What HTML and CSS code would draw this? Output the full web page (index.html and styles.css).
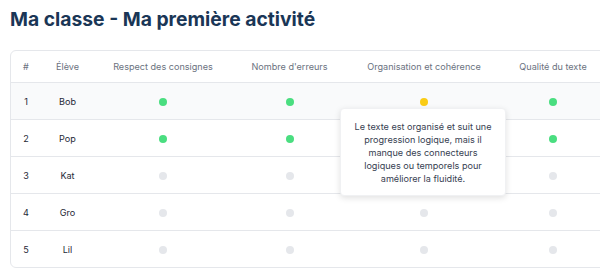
FILE: index.html
```html
<!DOCTYPE html>
<html lang="fr">
<head>
<meta charset="utf-8">
<title>Ma classe</title>
<link rel="stylesheet" href="styles.css">
</head>
<body>
<h1 class="title">Ma classe - Ma première activité</h1>
<div class="card">
  <table class="grid">
    <colgroup>
      <col class="c-num"><col class="c-name"><col class="c-a"><col class="c-b"><col class="c-c"><col class="c-d"><col class="c-e">
    </colgroup>
    <thead>
      <tr>
        <th>#</th><th>Élève</th><th>Respect des consignes</th><th>Nombre d'erreurs</th><th>Organisation et cohérence</th><th>Qualité du texte</th><th></th>
      </tr>
    </thead>
    <tbody>
      <tr class="hover">
        <td>1</td><td>Bob</td><td><span class="dot green"></span></td><td><span class="dot green"></span></td>
        <td class="has-tip"><span class="dot yellow"></span>
          <div class="tip">Le texte est organisé et suit une progression logique, mais il manque des connecteurs logiques ou temporels pour améliorer la fluidité.</div>
        </td>
        <td><span class="dot green"></span></td><td></td>
      </tr>
      <tr>
        <td>2</td><td>Pop</td><td><span class="dot green"></span></td><td><span class="dot green"></span></td><td><span class="dot green"></span></td><td><span class="dot green"></span></td><td></td>
      </tr>
      <tr>
        <td>3</td><td>Kat</td><td><span class="dot gray"></span></td><td><span class="dot gray"></span></td><td><span class="dot gray"></span></td><td><span class="dot gray"></span></td><td></td>
      </tr>
      <tr>
        <td>4</td><td>Gro</td><td><span class="dot gray"></span></td><td><span class="dot gray"></span></td><td><span class="dot gray"></span></td><td><span class="dot gray"></span></td><td></td>
      </tr>
      <tr>
        <td>5</td><td>Lil</td><td><span class="dot gray"></span></td><td><span class="dot gray"></span></td><td><span class="dot gray"></span></td><td><span class="dot gray"></span></td><td></td>
      </tr>
    </tbody>
  </table>
</div>
</body>
</html>
```
FILE: styles.css
```css
html, body {
  margin: 0;
  overflow: hidden;
}
body {
  padding: 7px 10px 0 10px;
  font-family: Inter, "Noto Sans", sans-serif;
  background: #ffffff;
  width: 700px;
}
.title {
  margin: 0;
  font-size: 19.3px;
  line-height: 24px;
  font-weight: 700;
  color: #1a3656;
}
.card {
  margin-top: 19px;
  border: 1px solid #e5e7eb;
  border-radius: 6px;
  width: 660px;
}
.grid {
  border-collapse: collapse;
  table-layout: fixed;
  width: 100%;
}
.c-num { width: 30px; }
.c-name { width: 53px; }
.c-a { width: 138px; }
.c-b { width: 115px; }
.c-c { width: 154px; }
.c-d { width: 104px; }
.c-e { width: auto; }
.grid th {
  height: 31px;
  padding: 0;
  font-size: 9.1px;
  font-weight: 400;
  color: #6b7280;
  text-align: center;
  border-bottom: 1px solid #e5e7eb;
}
.grid td {
  height: 36px;
  padding: 0;
  font-size: 9.1px;
  color: #1f2937;
  text-align: center;
  vertical-align: middle;
  border-bottom: 1px solid #e5e7eb;
}
.grid tbody tr:last-child td {
  border-bottom: none;
}
.grid tr.hover td {
  background: #f9fafb;
}
.dot {
  display: inline-block;
  width: 8px;
  height: 8px;
  border-radius: 50%;
  vertical-align: middle;
}
.green { background: #4ade80; }
.yellow { background: #facc15; }
.gray { background: #e5e7eb; }
.has-tip {
  position: relative;
}
.tip {
  position: absolute;
  left: -7px;
  top: 25px;
  width: 140px;
  padding: 11px 12px 10px;
  background: #ffffff;
  border: 1px solid #f0f1f3;
  border-radius: 4px;
  box-shadow: 0 2px 6px rgba(0, 0, 0, 0.12);
  font-size: 9.1px;
  line-height: 13px;
  color: #374151;
  text-align: center;
  z-index: 2;
}
```
